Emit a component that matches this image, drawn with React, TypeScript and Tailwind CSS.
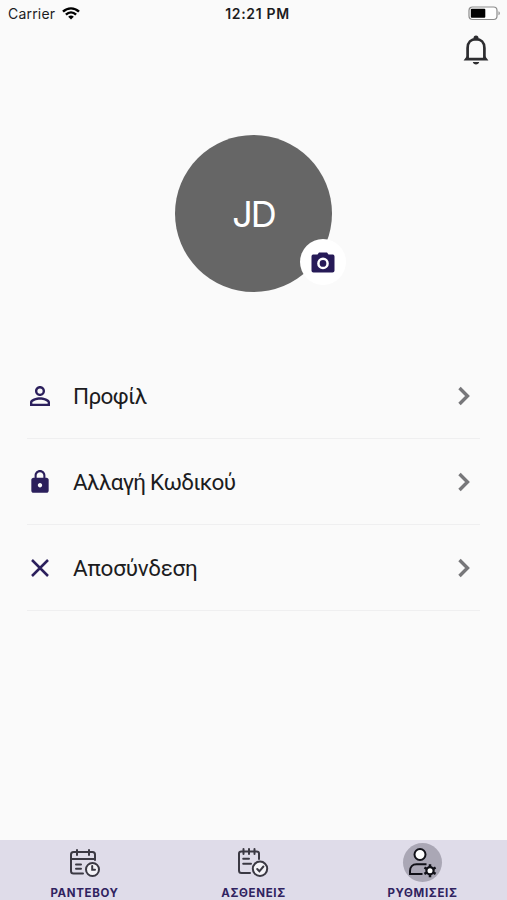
import type { ReactNode } from 'react';
import { MdLock, MdPersonOutline } from 'react-icons/md';

type Item = { label: string; icon: ReactNode; tracking: string };

const items: Item[] = [
  { label: 'Προφίλ', icon: <MdPersonOutline className="shrink-0" size={30} />, tracking: 'tracking-[-0.6px]' },
  { label: 'Αλλαγή Κωδικού', icon: <MdLock className="shrink-0" size={26} />, tracking: 'tracking-[-0.75px]' },
  { label: 'Αποσύνδεση', icon: <CrossIcon />, tracking: 'tracking-[-0.25px]' },
];

function CrossIcon() {
  return (
    <svg width="18" height="18" viewBox="0 0 18 18" fill="none" stroke="currentColor" strokeWidth="2.5">
      <path d="M1 1l16 16M17 1L1 17" />
    </svg>
  );
}

function CameraIcon() {
  return (
    <svg width="24" height="21" viewBox="0 0 24 21">
      <path
        d="M8 .5h8l1.500 2h4c1.200 0 2 .8 2 2V18.500c0 1.200-.8 2-2 2h-19c-1.200 0-2-.8-2-2V4.500c0-1.200.8-2 2-2h4z"
        fill="currentColor"
      />
      <circle cx="12" cy="11.400" r="4.600" fill="none" stroke="#fff" strokeWidth="2.500" />
    </svg>
  );
}

function WifiIcon() {
  return (
    <svg width="18" height="13" viewBox="0 0 18 13" fill="none" stroke="#000" strokeWidth="2.4">
      <path d="M1 4.700c4.600-4.500 11.400-4.500 16 0M3.900 7.700c3-2.900 7.200-2.900 10.200 0" />
      <path d="M9 12.500L6.200 9.700c1.600-1.500 4-1.500 5.600 0z" fill="#000" stroke="none" />
    </svg>
  );
}

function BatteryIcon() {
  return (
    <svg width="33" height="15" viewBox="0 0 33 15">
      <rect x="1" y="1" width="28" height="12.500" rx="3.500" fill="#fff" stroke="#8c8c8c" strokeWidth="1.200" />
      <rect x="2.800" y="2.800" width="14.500" height="9" rx="1" fill="#000" />
      <path d="M30.500 5.300c1.800.7 1.800 3.300 0 4z" fill="#8c8c8c" />
    </svg>
  );
}

function BellIcon() {
  return (
    <svg width="26" height="31" viewBox="0 0 26 31" fill="none" stroke="#2d2d30">
      <circle cx="13" cy="3" r="2.500" fill="#2d2d30" stroke="none" />
      <path d="M4.600 24V13c0-5.500 3.500-8.800 8.400-8.800s8.400 3.300 8.400 8.800v11" strokeWidth="2.700" />
      <path d="M4 21L.6 25.600h24.800L22 21v1.700H4z" fill="#2d2d30" stroke="none" />
      <path d="M9.800 27h6.400c-.4 3.300-6 3.300-6.400 0z" fill="#2d2d30" stroke="none" />
    </svg>
  );
}

function CalendarIcon() {
  return (
    <svg width="30" height="28" viewBox="0 0 30 28" fill="none" stroke="#3b3943" strokeWidth="2" strokeLinecap="round">
      <path d="M13 24.500H3.500C2 24.500 1 23.500 1 22V5.500C1 4 2 3 3.500 3h19C24 3 25 4 25 5.500v5.500M1 10h24M7 1v5M19 1v5M6 15.500h5M6 19.800h5" />
      <circle cx="22.500" cy="20.500" r="6.500" fill="#f5f4f8" />
      <path d="M22.200 17v3.800h2.800" />
    </svg>
  );
}

function NotesIcon() {
  return (
    <svg width="31" height="29" viewBox="0 0 31 29" fill="none" stroke="#3b3943" strokeWidth="2" strokeLinecap="round">
      <path d="M12 25H3.500C2 25 1 24 1 22.500V5.500C1 4 2 3.500 3.500 3.500h15C20 3.500 21 4 21 5.500V11M5.500 1v5M11 1v5M16.500 1v5M5.200 10.800H11M5.200 15.800H13" />
      <circle cx="22" cy="20.800" r="7.200" fill="#f5f4f8" />
      <path d="M19.200 21l2.200 2.300 4-4.800" />
    </svg>
  );
}

function UserGearIcon() {
  return (
    <svg width="30" height="30" viewBox="0 0 30 30" fill="none" stroke="#111118" strokeWidth="2">
      <circle cx="12" cy="6.500" r="5.500" fill="#fff" />
      <path d="M14.500 26H2v-3c0-4 2.500-6.800 6.500-6.800h10" />
      <circle cx="22" cy="22.700" r="3.600" fill="#fff" strokeWidth="2.200" />
      <path
        d="M22 18.800v-2.600M22 26.600v2.600M18.700 20.800l-2.300-1.300M25.300 24.600l2.300 1.300M18.700 24.600l-2.300 1.300M25.300 20.800l2.300-1.300"
        strokeWidth="2.500"
      />
    </svg>
  );
}

function Tab({ label, children, active }: { label: string; children: ReactNode; active?: boolean }) {
  return (
    <button className="flex flex-col items-center pt-[3px]">
      <span className={`flex size-[39px] items-center justify-center rounded-full ${active ? 'bg-[#aaa7b5]' : ''}`}>
        {children}
      </span>
      <span className="mt-[3px] text-[11.5px] leading-4 font-bold tracking-[0.65px] text-[#30235f]">{label}</span>
    </button>
  );
}

export default function App() {
  return (
    <div className="flex h-[900px] w-[507px] flex-col bg-[#fafafa] font-['Inter','Liberation_Sans',sans-serif] text-[#1c1c1e]">
      <header className="grid h-[27px] grid-cols-3 items-center pr-[6px] pl-2">
        <div className="flex items-center gap-[7px] text-[14px] tracking-[0.2px]">
          Carrier <WifiIcon />
        </div>
        <div className="pl-[6px] text-center text-[14px] font-semibold tracking-[0.65px]">12:21 PM</div>
        <div className="flex justify-end"><BatteryIcon /></div>
      </header>

      <div className="flex justify-end pt-[8px] pr-[18px]">
        <button><BellIcon /></button>
      </div>

      <div className="mt-[69px] flex justify-center">
        <div className="relative flex size-[157px] items-center justify-center rounded-full bg-[#666]">
          <span className="text-[36px] leading-none tracking-[-2px] text-white">JD</span>
          <button className="absolute right-[-14px] bottom-[7px] flex size-[46px] items-center justify-center rounded-full bg-white text-[#261a57]">
            <CameraIcon />
          </button>
        </div>
      </div>

      <ul className="mt-[61px] mr-[27px] ml-[27px]">
        {items.map(item => (
          <li key={item.label} className="flex h-[86px] items-center border-b border-[#efeff0]">
            <span className="flex w-[26px] justify-center text-[#2b1f5c]">{item.icon}</span>
            <span className={`ml-5 flex-1 font-['Roboto','Inter',sans-serif] text-[22.5px] leading-7 ${item.tracking}`}>
              {item.label}
            </span>
            <svg className="mr-[9px]" width="14" height="20" viewBox="0 0 14 20" fill="none" stroke="#77777a" strokeWidth="3.4">
              <path d="M2.500 2l8 8-8 8" />
            </svg>
          </li>
        ))}
      </ul>

      <nav className="mt-auto grid h-[60px] grid-cols-3 bg-[#dfdce9]">
        <Tab label="ΡΑΝΤΕΒΟΥ"><CalendarIcon /></Tab>
        <Tab label="ΑΣΘΕΝΕΙΣ"><NotesIcon /></Tab>
        <Tab label="ΡΥΘΜΙΣΕΙΣ" active><UserGearIcon /></Tab>
      </nav>
    </div>
  );
}
